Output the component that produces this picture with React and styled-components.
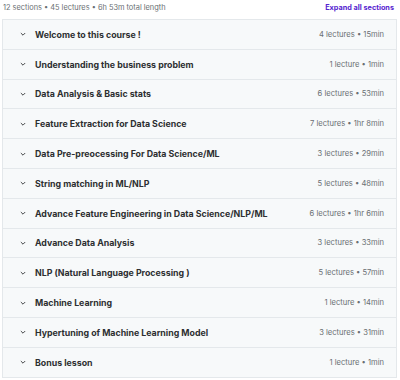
import React from "react";
import styled, { createGlobalStyle } from "styled-components";

const Global = createGlobalStyle`
  html, body { margin: 0; padding: 0; background: #fff; }
  body { font-family: Inter, "Noto Sans", sans-serif; }
`;

const Wrap = styled.div`
  width: 400px;
  height: 380px;
  box-sizing: border-box;
  padding: 0 3px 0 2px;
  display: flex;
  flex-direction: column;
`;

const Header = styled.div`
  height: 19px;
  display: flex;
  align-items: center;
  justify-content: space-between;
  padding: 0 3px 0 1px;
  margin-top: -2px;
`;

const Summary = styled.span`
  font-size: 7.4px;
  color: #6a6f73;
`;

const Expand = styled.span`
  font-size: 7.3px;
  font-weight: 700;
  color: #5624d0;
`;

const List = styled.div`
  border: 1px solid #e4e8eb;
  display: flex;
  flex-direction: column;
  margin-top: 2px;
`;

const Row = styled.div`
  height: 28.8px;
  display: flex;
  align-items: center;
  background: #f7f9fa;
  padding: 0 12px 0 16px;
  border-bottom: ${(p) => (p.$last ? "none" : "1px solid #e4e8eb")};
`;

const Chevron = styled.svg`
  width: 8px;
  height: 8px;
  margin-right: 8px;
  flex: none;
`;

const Title = styled.span`
  flex: 1;
  font-size: 8.8px;
  font-weight: 700;
  color: #2d2f31;
  white-space: nowrap;
`;

const Meta = styled.span`
  font-size: 7.6px;
  color: #6a6f73;
  white-space: nowrap;
`;

const sections = [
  ["Welcome to this course !", "4 lectures • 15min"],
  ["Understanding the business problem", "1 lecture • 1min"],
  ["Data Analysis & Basic stats", "6 lectures • 53min"],
  ["Feature Extraction for Data Science", "7 lectures • 1hr 8min"],
  ["Data Pre-preocessing For Data Science/ML", "3 lectures • 29min"],
  ["String matching in ML/NLP", "5 lectures • 48min"],
  ["Advance Feature Engineering in Data Science/NLP/ML", "6 lectures • 1hr 6min"],
  ["Advance Data Analysis", "3 lectures • 33min"],
  ["NLP (Natural Language Processing )", "5 lectures • 57min"],
  ["Machine Learning", "1 lecture • 14min"],
  ["Hypertuning of Machine Learning Model", "3 lectures • 31min"],
  ["Bonus lesson", "1 lecture • 1min"],
];

export default function App() {
  return (
    <>
      <Global />
      <Wrap>
        <Header>
          <Summary>12 sections • 45 lectures • 6h 53m total length</Summary>
          <Expand>Expand all sections</Expand>
        </Header>
        <List>
          {sections.map(([t, m], i) => (
            <Row key={t} $last={i === sections.length - 1}>
              <Chevron viewBox="0 0 10 10">
                <path d="M2.3 3.8 L5 6.5 L7.7 3.8" fill="none" stroke="#2d2f31" strokeWidth="1.1" />
              </Chevron>
              <Title>{t}</Title>
              <Meta>{m}</Meta>
            </Row>
          ))}
        </List>
      </Wrap>
    </>
  );
}
